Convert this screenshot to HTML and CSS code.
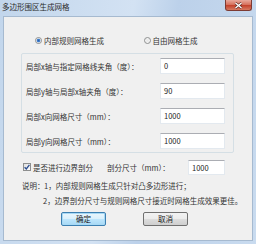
FILE: index.html
```html
<!DOCTYPE html>
<html lang="zh-CN">

<head>
    <meta charset="UTF-8">
    <title>多边形围区生成网格</title>
    <link rel="stylesheet" href="styles.css">
</head>

<body>
    <div class="window">
        <div class="titlebar">
            <span class="title">多边形围区生成网格</span>
            <div class="close">
                <svg width="9" height="7" viewBox="0 0 9 7">
                    <path d="M1.5 1 L7.5 6 M7.5 1 L1.5 6" stroke="#5a2a24" stroke-width="2.6" />
                    <path d="M1.5 1 L7.5 6 M7.5 1 L1.5 6" stroke="#fff" stroke-width="1.4" />
                </svg>
            </div>
        </div>
        <div class="client">
            <div class="radios">
                <label class="opt"><span class="radio on"></span>内部规则网格生成</label>
                <label class="opt"><span class="radio"></span>自由网格生成</label>
            </div>
            <div class="group">
                <div class="row"><span>局部x轴与指定网格线夹角（度）：</span><div class="input">0</div></div>
                <div class="row"><span>局部y轴与局部x轴夹角（度）：</span><div class="input">90</div></div>
                <div class="row"><span>局部x向网格尺寸（mm）：</span><div class="input">1000</div></div>
                <div class="row"><span>局部y向网格尺寸（mm）：</span><div class="input">1000</div></div>
            </div>
            <div class="boundary">
                <label class="check">
                    <span class="box">
                        <svg width="6" height="6" viewBox="0 0 6 6">
                            <path d="M0.6 3.2 L2.3 4.9 L5.4 0.8" fill="none" stroke="#2a4c8f" stroke-width="1.3" />
                        </svg>
                    </span>是否进行边界剖分
                </label>
                <span class="size-label">剖分尺寸（mm）：</span>
                <div class="input small">1000</div>
            </div>
            <div class="notes">
                <span>说明：</span><span>1，内部规则网格生成只针对凸多边形进行；</span>
                <span></span><span class="second">2，边界剖分尺寸与规则网格尺寸接近时网格生成效果更佳。</span>
            </div>
            <div class="buttons">
                <button class="btn default">确定</button>
                <button class="btn">取消</button>
            </div>
        </div>
    </div>
</body>

</html>
```

FILE: styles.css
```css
* {
    box-sizing: border-box;
}

body {
    margin: 0;
    font-family: "Noto Sans CJK SC", "Noto Sans", sans-serif;
    font-size: 7.5px;
    color: #333;
}

.window {
    display: flex;
    flex-direction: column;
    width: 256px;
    height: 244px;
    padding: 0 3px 3px;
    background: linear-gradient(100deg, #c2d6ec 0%, #d3e2f3 45%, #bcd1ea 60%, #c9dbef 100%);
}

.titlebar {
    display: flex;
    justify-content: space-between;
    align-items: flex-start;
    height: 16px;
}

.title {
    margin: 3px 0 0 -1px;
    line-height: 8px;
    color: #2a2a2a;
}

.close {
    display: flex;
    justify-content: center;
    align-items: center;
    width: 27px;
    height: 11px;
    margin-right: 1px;
    border: 1px solid #7d3b33;
    border-top: none;
    border-radius: 0 0 3px 3px;
    background: linear-gradient(#e9a99c 0%, #d7735f 45%, #c4432d 55%, #d77a62 100%);
}

.client {
    flex: 1;
    border: 1px solid #a6bad0;
    background-color: #f0f0f0;
}

.radios {
    display: flex;
    align-items: center;
    height: 10px;
    margin-top: 18px;
    padding-left: 31px;
}

.opt {
    display: flex;
    align-items: center;
    gap: 2px;
    width: 115px;
}

.radio {
    width: 7px;
    height: 7px;
    border: 1px solid #8e8f8f;
    border-radius: 50%;
    background: radial-gradient(#e8e8e8, #f8f8f8);
}

.radio.on {
    background: radial-gradient(circle, #2c5ea8 0, #4a8ad8 1.6px, #f4f4f4 2.2px);
}

.group {
    display: grid;
    grid-template-columns: 1fr 65px;
    grid-auto-rows: 16px;
    row-gap: 9px;
    width: 213px;
    height: 100px;
    margin: 8px 0 0 17px;
    padding: 4px 8px 0 4px;
    border: 1px solid #d5dfe5;
    border-radius: 2px;
}

.row {
    display: contents;
}

.row span {
    align-self: center;
}

.input {
    height: 16px;
    padding: 0 3px;
    line-height: 14px;
    border: 1px solid #e3e9ef;
    border-top-color: #abadb3;
    background-color: #fff;
    color: #222;
}

.boundary {
    display: flex;
    align-items: center;
    height: 16px;
    margin-top: 6px;
    padding-left: 19px;
}

.check {
    display: flex;
    align-items: center;
    gap: 2px;
    width: 84px;
}

.box {
    display: flex;
    justify-content: center;
    align-items: center;
    width: 8px;
    height: 8px;
    border: 1px solid #8e8f8f;
    background: linear-gradient(135deg, #e0e0e0, #fcfcfc);
}

.size-label {
    width: 81px;
}

.input.small {
    width: 37px;
    height: 15px;
    line-height: 13px;
}

.notes {
    display: grid;
    grid-template-columns: 22px 1fr;
    margin-top: 3px;
    padding-left: 18px;
    line-height: 15px;
    white-space: nowrap;
}

.second {
    margin-left: -1px;
}

.buttons {
    display: flex;
    gap: 37px;
    margin-top: 4px;
    padding-left: 57px;
}

.btn {
    width: 45px;
    height: 14px;
    padding: 0;
    font-family: inherit;
    font-size: 7.5px;
    line-height: 12px;
    color: #222;
    border: 1px solid #707070;
    border-radius: 2px;
    background: linear-gradient(#f2f2f2 0%, #ebebeb 50%, #dddddd 50%, #cfcfcf 100%);
}

.btn.default {
    border-color: #3c7fb1;
    box-shadow: inset 0 0 0 1px #a7d9f5;
    background: linear-gradient(#eaf6fd 0%, #d9f0fc 50%, #bee6fd 50%, #a7d9f5 100%);
}
```
